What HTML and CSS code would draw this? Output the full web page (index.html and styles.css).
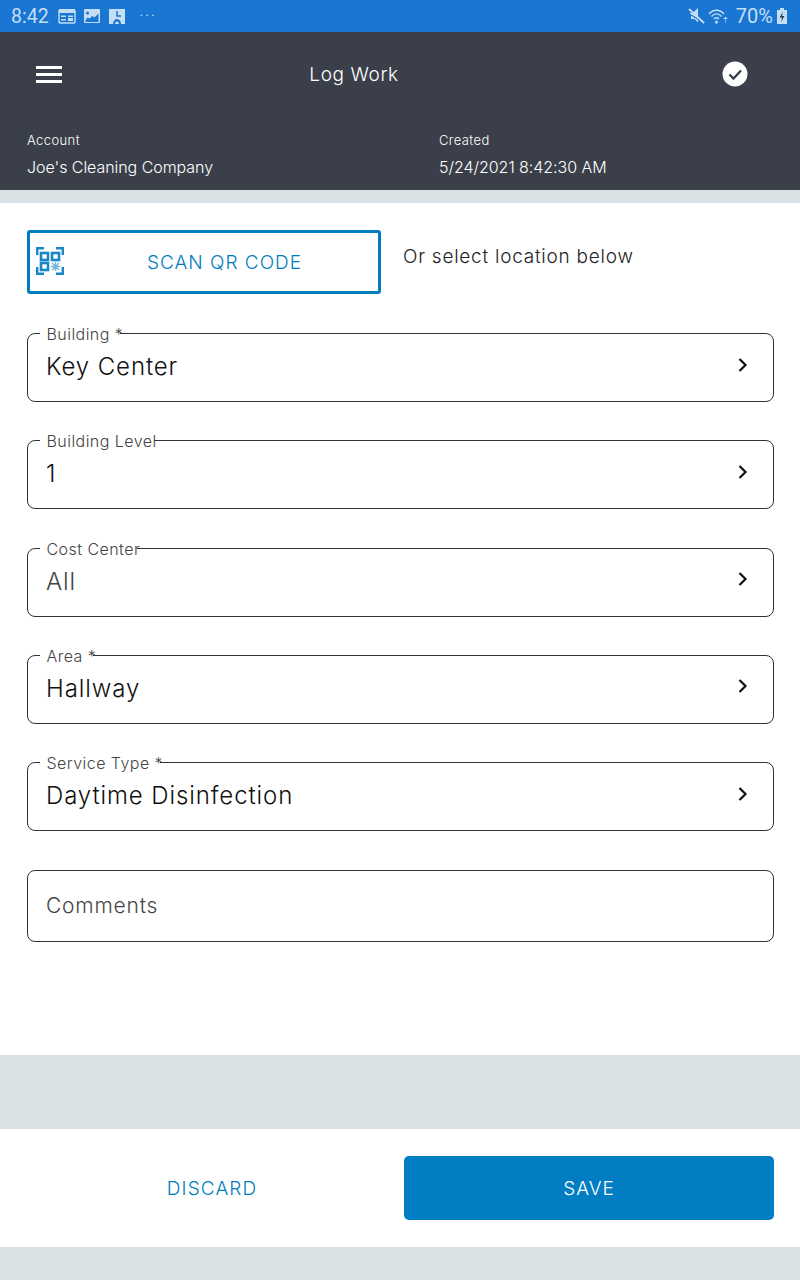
FILE: index.html
```html
<!DOCTYPE html>
<html lang="en">
<head>
    <meta charset="UTF-8">
    <meta name="viewport" content="width=device-width, initial-scale=1.0">
    <title>Log Work</title>
    <link rel="stylesheet" href="styles.css">
</head>
<body>
    <div class="statusbar">
        <div class="status-left">
            <span class="status-time">8:42</span>
            <svg class="status-icon" width="18" height="16" viewBox="0 0 18 16"><rect x="1" y="2" width="16" height="13" rx="1" fill="none" stroke="currentColor" stroke-width="1.4"/><path d="M1 1h16v4H1zM3 7.500h5V9H3zM3 11h5v1.500H3zM10 7.500h5v1.500h-5zM10 10h5v3h-5z" fill="currentColor"/></svg>
            <svg class="status-icon" width="18" height="16" viewBox="0 0 18 16"><path d="M2 1h14a1 1 0 0 1 1 1v12a1 1 0 0 1-1 1H2a1 1 0 0 1-1-1V2a1 1 0 0 1 1-1zm2.500 2.500a1.500 1.500 0 1 0 0 3 1.500 1.500 0 0 0 0-3zM2.500 12.500V14h13V5.500l-4 4-2-1.500-3 2.500-2-1z" fill="currentColor" fill-rule="evenodd"/></svg>
            <svg class="status-icon" width="18" height="17" viewBox="0 0 18 17"><path d="M1 1h16v15H1z" fill="currentColor"/><path d="M9 3v5h4" fill="none" stroke="#1976d2" stroke-width="1.500"/><path d="M5 16c0-3 1.800-5 4-5s4 2 4 5h-2c0-1.500-.8-2.500-2-2.500S7 14.500 7 16z" fill="#1976d2"/></svg>
            <span class="status-more">···</span>
        </div>
        <div class="status-right">
            <svg class="status-icon" width="17" height="18" viewBox="0 0 17 18"><path d="M1 6h3.500L10 1v10.500zM3 8.500V12h3.500L10 15.500V13z" fill="currentColor"/><path d="M1 2l15 14" stroke="currentColor" stroke-width="1.800"/></svg>
            <svg class="status-icon" width="21" height="16" viewBox="0 0 21 16"><path d="M1 6c4-5 11-5 15 0M3.500 8.500c3-3.500 7-3.500 10 0M6 11c1.500-1.500 3.500-1.500 5 0" fill="none" stroke="currentColor" stroke-width="1.300"/><path d="M8.500 12.500l1.500 2-1.500 1-1.500-1zM17.500 15V9M15.500 11l2-2 2 2" fill="currentColor" stroke="currentColor" stroke-width=".6"/></svg>
            <span class="status-battery">70%</span>
            <svg class="status-icon" width="12" height="18" viewBox="0 0 12 18"><path d="M4 1h4v2h3v14H1V3h3z" fill="currentColor"/><path d="M7 5L3.500 10.500H6L5 15l3.500-6H6z" fill="#2b3a4a"/></svg>
        </div>
    </div>

    <div class="header">
        <div class="toolbar">
            <div class="menu-icon"><span></span><span></span><span></span></div>
            <div class="toolbar-title">Log Work</div>
            <svg class="check-icon" width="26" height="26" viewBox="0 0 26 26"><circle cx="13" cy="13" r="12.500" fill="#fff"/><path d="M7.500 13.500l4 4 7.500-8" fill="none" stroke="#3a3f4a" stroke-width="2.400"/></svg>
        </div>
        <div class="info-row">
            <div class="info-col">
                <div class="info-label">Account</div>
                <div class="info-value">Joe's Cleaning Company</div>
            </div>
            <div class="info-col">
                <div class="info-label">Created</div>
                <div class="info-value">5/24/2021 8:42:30 AM</div>
            </div>
        </div>
    </div>

    <div class="form">
        <div class="scan-row">
            <div class="scan-btn">
                <svg class="qr-icon" width="28" height="28" viewBox="0 0 28 28" fill="none" stroke="#1a86c8">
                    <path d="M1.200 8V1.200H8M20 1.200h6.800V8M1.200 20v6.800H8M20 26.800h6.800V20" stroke-width="2.400"/>
                    <rect x="5" y="6" width="7" height="7" stroke-width="2.600"/>
                    <rect x="16" y="6" width="7" height="7" stroke-width="2.600"/>
                    <rect x="5" y="16" width="7" height="7" stroke-width="2.600"/>
                    <path d="M16 16l7 7M23 16l-7 7M19.500 15v9M15 19.500h9" stroke-width="1.400" opacity=".6"/>
                </svg>
                <span>SCAN QR CODE</span>
            </div>
            <div class="scan-hint">Or select location below</div>
        </div>

        <div class="fields">
            <div class="field">
                <span class="field-label">Building *</span>
                <span class="field-value">Key Center</span>
                <svg class="chevron" width="12" height="16" viewBox="0 0 12 16"><path d="M2.500 2l6 6-6 6" fill="none" stroke="#111" stroke-width="2.200"/></svg>
            </div>
            <div class="field">
                <span class="field-label">Building Level</span>
                <span class="field-value">1</span>
                <svg class="chevron" width="12" height="16" viewBox="0 0 12 16"><path d="M2.500 2l6 6-6 6" fill="none" stroke="#111" stroke-width="2.200"/></svg>
            </div>
            <div class="field">
                <span class="field-label">Cost Center</span>
                <span class="field-value muted">All</span>
                <svg class="chevron" width="12" height="16" viewBox="0 0 12 16"><path d="M2.500 2l6 6-6 6" fill="none" stroke="#111" stroke-width="2.200"/></svg>
            </div>
            <div class="field">
                <span class="field-label">Area *</span>
                <span class="field-value">Hallway</span>
                <svg class="chevron" width="12" height="16" viewBox="0 0 12 16"><path d="M2.500 2l6 6-6 6" fill="none" stroke="#111" stroke-width="2.200"/></svg>
            </div>
            <div class="field">
                <span class="field-label">Service Type *</span>
                <span class="field-value">Daytime Disinfection</span>
                <svg class="chevron" width="12" height="16" viewBox="0 0 12 16"><path d="M2.500 2l6 6-6 6" fill="none" stroke="#111" stroke-width="2.200"/></svg>
            </div>
            <div class="field comments">
                <span class="field-value muted">Comments</span>
            </div>
        </div>
    </div>

    <div class="band"></div>

    <div class="footer">
        <div class="discard">DISCARD</div>
        <div class="save">SAVE</div>
    </div>
</body>
</html>
```

FILE: styles.css
```css
* {
    box-sizing: border-box;
}
body {
    font-family: 'Inter', 'Liberation Sans', sans-serif;
    font-weight: 300;
    margin: 0;
    padding: 0;
    background: #dae2e5;
    color: #111;
    height: 1280px;
    overflow: hidden;
}
.statusbar {
    height: 32px;
    background: #1976d2;
    color: #c4def5;
    display: flex;
    align-items: center;
    justify-content: space-between;
    padding: 0 9px 0 11px;
    font-family: 'Roboto', sans-serif;
    font-weight: 400;
}
.status-left,
.status-right {
    display: flex;
    align-items: center;
}
.status-icon {
    display: block;
}
.status-time {
    font-size: 19.5px;
    margin-right: 9px;
}
.status-left .status-icon {
    margin-right: 7px;
}
.status-more {
    margin-left: 7px;
    font-size: 14px;
    letter-spacing: 2px;
}
.status-right .status-icon {
    margin-right: 3px;
}
.status-battery {
    font-size: 20px;
    margin: 0 3px 0 4px;
}
.header {
    height: 158px;
    background: #3a3f4a;
    color: #fff;
}
.toolbar {
    height: 84px;
    display: flex;
    align-items: center;
    padding: 0 52px 0 36px;
}
.menu-icon {
    width: 26px;
    display: flex;
    flex-direction: column;
    gap: 4px;
}
.menu-icon span {
    display: block;
    height: 3px;
    background: #fff;
}
.toolbar-title {
    flex-grow: 1;
    text-align: center;
    font-size: 19px;
    letter-spacing: .6px;
    padding-right: 76px;
}
.info-row {
    display: grid;
    grid-template-columns: 412px 1fr;
    padding: 16px 0 0 27px;
}
.info-label {
    font-size: 13px;
    letter-spacing: .4px;
    line-height: 16px;
    margin-bottom: 9px;
}
.info-value {
    font-size: 16px;
    letter-spacing: -.05px;
    line-height: 20px;
}
.form {
    margin-top: 13px;
    height: 852px;
    background: #fff;
    padding: 27px 26px 0 27px;
}
.scan-row {
    display: flex;
    height: 64px;
}
.scan-btn {
    width: 354px;
    height: 64px;
    border: 3px solid #007dbd;
    border-radius: 3px;
    display: flex;
    align-items: center;
    justify-content: center;
    padding-left: 41px;
    position: relative;
    color: #007dbd;
    font-size: 19px;
    letter-spacing: 1px;
}
.qr-icon {
    position: absolute;
    left: 6px;
    top: 14px;
}
.scan-hint {
    margin-left: 22px;
    padding-top: 15px;
    font-size: 19px;
    letter-spacing: .75px;
    color: #222;
}
.fields {
    margin-top: 39px;
    display: grid;
    row-gap: 38.32px;
}
.field {
    height: 69px;
    border: 1px solid #2e323b;
    border-radius: 8px;
    display: flex;
    align-items: center;
    justify-content: space-between;
    padding: 0 24px 2px 18px;
    position: relative;
}
.comments {
    height: 72px;
}
.field-label {
    position: absolute;
    left: 12px;
    top: -9px;
    padding: 0 7px 0 6.500px;
    font-size: 16px;
    letter-spacing: .45px;
    line-height: 18px;
    color: #444;
    background: linear-gradient(#fff, #fff) no-repeat;
    background-size: calc(100% - 10px) 100%;
}
.field-value {
    font-size: 24px;
    letter-spacing: .9px;
    color: #111;
}
.muted {
    color: #444;
}
.comments .muted {
    font-size: 21px;
    letter-spacing: .8px;
    padding-top: 2px;
}
.chevron {
    display: block;
    margin-bottom: 4px;
}
.band {
    height: 74px;
}
.footer {
    height: 118px;
    background: #fff;
    display: grid;
    grid-template-columns: 404px 370px;
    align-items: center;
}
.discard {
    text-align: center;
    font-size: 19px;
    letter-spacing: 1.1px;
    color: #007dbd;
    padding-left: 20px;
}
.save {
    height: 64px;
    background: #007dc3;
    color: #fff;
    border-radius: 5px;
    display: flex;
    align-items: center;
    justify-content: center;
    font-size: 19px;
    letter-spacing: 1px;
}
```
